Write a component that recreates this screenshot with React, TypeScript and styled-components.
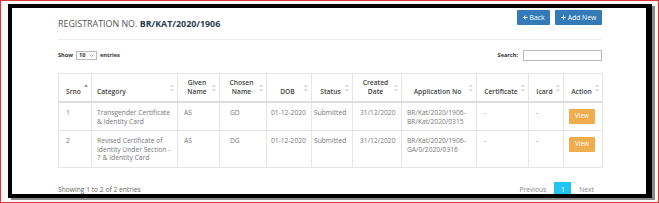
import styled, { createGlobalStyle } from "styled-components";
import { FaArrowLeft, FaPlus } from "react-icons/fa";

const GlobalStyle = createGlobalStyle`
  html, body {
    margin: 0;
    padding: 0;
    background: #ffffff;
  }
  body {
    font-family: "Open Sans", "Liberation Sans", sans-serif;
  }
`;

interface Column {
  title: string[];
  width: number;
  align?: "left" | "center";
  sorted?: boolean;
}

const columns: Column[] = [
  { title: ["Srno"], width: 33, sorted: true },
  { title: ["Category"], width: 86, align: "left" },
  { title: ["Given", "Name"], width: 42 },
  { title: ["Chosen", "Name"], width: 47 },
  { title: ["DOB"], width: 45 },
  { title: ["Status"], width: 41 },
  { title: ["Created", "Date"], width: 49 },
  { title: ["Application No"], width: 75 },
  { title: ["Certificate"], width: 52 },
  { title: ["Icard"], width: 35 },
  { title: ["Action"], width: 39 },
];

const rows = [
  {
    srno: "1",
    category: "Transgender Certificate & Identity Card",
    given: "AS",
    chosen: "GD",
    dob: "01-12-2020",
    status: "Submitted",
    created: "31/12/2020",
    appNo: "BR/Kat/2020/1906-BR/Kat/2020/0315",
  },
  {
    srno: "2",
    category: "Revised Certificate of Identity Under Section - 7 & Identity Card",
    given: "AS",
    chosen: "DG",
    dob: "01-12-2020",
    status: "Submitted",
    created: "31/12/2020",
    appNo: "BR/Kat/2020/1906-GA/0/2020/0316",
  },
];

function SortIcon({ sorted }: { sorted?: boolean }) {
  return (
    <StyledSort viewBox="0 0 4 8" width="4" height="8">
      <path d="M2 0 L4 3 L0 3 Z" fill={sorted ? "#9a9a9a" : "#dcdcdc"} />
      {!sorted && <path d="M0 5 L4 5 L2 8 Z" fill="#dcdcdc" />}
    </StyledSort>
  );
}

function App() {
  return (
    <>
      <GlobalStyle />
      <StyledPage>
        <StyledFrame>
          <StyledContent>
            <StyledHeader>
              <StyledTitle>
                REGISTRATION NO. <b>BR/KAT/2020/1906</b>
              </StyledTitle>
              <StyledActions>
                <StyledButton $width={33}>
                  <FaArrowLeft size={5} /> Back
                </StyledButton>
                <StyledButton $width={47}>
                  <FaPlus size={5} /> Add New
                </StyledButton>
              </StyledActions>
            </StyledHeader>

            <StyledControls>
              <StyledLabel>
                Show
                <StyledSelect>
                  <span>10</span>
                  <svg width="5" height="3" viewBox="0 0 5 3">
                    <path d="M0.5 0.5 L2.5 2.5 L4.5 0.5" stroke="#777" strokeWidth="0.7" fill="none" />
                  </svg>
                </StyledSelect>
                entries
              </StyledLabel>
              <StyledLabel>
                Search:
                <StyledSearch />
              </StyledLabel>
            </StyledControls>

            <StyledTable>
              <colgroup>
                {columns.map((c) => (
                  <col key={c.title.join(" ")} style={{ width: c.width }} />
                ))}
              </colgroup>
              <thead>
                <tr>
                  {columns.map((c) => (
                    <StyledTh key={c.title.join(" ")} $align={c.align ?? "center"}>
                      {c.title.map((t, i) => (
                        <div key={i}>{t}</div>
                      ))}
                      <SortIcon sorted={c.sorted} />
                    </StyledTh>
                  ))}
                </tr>
              </thead>
              <tbody>
                {rows.map((r) => (
                  <tr key={r.srno}>
                    <StyledTd $pad={7}>{r.srno}</StyledTd>
                    <StyledTd>{r.category}</StyledTd>
                    <StyledTd $pad={6}>{r.given}</StyledTd>
                    <StyledTd $pad={10}>{r.chosen}</StyledTd>
                    <StyledTd $pad={4}>{r.dob}</StyledTd>
                    <StyledTd $pad={2}>{r.status}</StyledTd>
                    <StyledTd $pad={7}>{r.created}</StyledTd>
                    <StyledTd>{r.appNo}</StyledTd>
                    <StyledTd $pad={7}>-</StyledTd>
                    <StyledTd $pad={7}>-</StyledTd>
                    <StyledTd>
                      <StyledView>View</StyledView>
                    </StyledTd>
                  </tr>
                ))}
              </tbody>
            </StyledTable>

            <StyledFooter>
              <span>Showing 1 to 2 of 2 entries</span>
              <StyledPager>
                <StyledPageLink>Previous</StyledPageLink>
                <StyledPageNum>1</StyledPageNum>
                <StyledPageLink>Next</StyledPageLink>
              </StyledPager>
            </StyledFooter>
          </StyledContent>
        </StyledFrame>
      </StyledPage>
    </>
  );
}

export default App;

const StyledPage = styled.div`
  width: 659px;
  height: 203px;
  box-sizing: border-box;
  border: 1px solid #d9353a;
  padding: 3px 0 0 7px;
  background: #fdf9f9;
  overflow: hidden;
`;

const StyledFrame = styled.div`
  width: 644px;
  height: 194px;
  box-sizing: border-box;
  border: 4px solid #000;
  border-right-width: 6px;
  box-shadow: 3px 2px 0 #8a8a8a;
  background: #fff;
`;

const StyledContent = styled.div`
  height: 100%;
  box-sizing: border-box;
  padding: 0 44px 0 46px;
  overflow: hidden;
`;

const StyledHeader = styled.div`
  display: flex;
  justify-content: space-between;
  align-items: flex-start;
  height: 32px;
  box-sizing: border-box;
  padding-top: 2px;
  border-bottom: 1px solid #eeeeee;
`;

const StyledTitle = styled.h1`
  margin: 9px 0 0;
  font-size: 8.9px;
  line-height: 10px;
  font-weight: 400;
  color: #555;

  b {
    color: #2c3e50;
    font-weight: 700;
  }
`;

const StyledActions = styled.div`
  display: flex;
  gap: 5px;
`;

const StyledButton = styled.button<{ $width: number }>`
  display: flex;
  align-items: center;
  justify-content: center;
  gap: 2px;
  width: ${(p) => p.$width}px;
  height: 15px;
  padding: 0;
  border: none;
  border-radius: 1px;
  background: #337ab7;
  color: #fff;
  font-family: inherit;
  font-size: 6.8px;
`;

const StyledControls = styled.div`
  display: flex;
  justify-content: space-between;
  align-items: center;
  margin-top: 9px;
  height: 12px;
`;

const StyledLabel = styled.label`
  display: flex;
  align-items: center;
  gap: 3px;
  font-size: 5.6px;
  font-weight: 700;
  color: #333;
`;

const StyledSelect = styled.div`
  display: flex;
  align-items: center;
  justify-content: space-between;
  width: 21px;
  height: 9px;
  box-sizing: border-box;
  padding: 0 2px;
  border: 1px solid #bbb;
  background: #fff;
`;

const StyledSearch = styled.div`
  width: 79px;
  height: 11px;
  box-sizing: border-box;
  border: 1px solid #bbb;
  margin-left: 2px;
`;

const StyledTable = styled.table`
  width: 544px;
  margin-top: 12px;
  table-layout: fixed;
  border-collapse: collapse;
  font-size: 6.7px;
  line-height: 8.5px;
`;

const StyledTh = styled.th<{ $align: "left" | "center" }>`
  position: relative;
  vertical-align: bottom;
  text-align: ${(p) => p.$align};
  padding: 3px 8px 5px 5px;
  height: 19px;
  font-weight: 600;
  color: #444;
  line-height: 9px;
  border: 1px solid #e6e6e6;
  border-bottom: 2px solid #dddddd;
`;

const StyledSort = styled.svg`
  position: absolute;
  right: 3px;
  top: 10px;
`;

const StyledTd = styled.td<{ $pad?: number }>`
  vertical-align: top;
  padding: 6px 4px 4px ${(p) => p.$pad ?? 5}px;
  color: #777;
  border: 1px solid #e6e6e6;
  overflow-wrap: break-word;
`;

const StyledView = styled.div`
  width: 26px;
  height: 15px;
  display: flex;
  align-items: center;
  justify-content: center;
  border-radius: 1px;
  background: #f0ad4e;
  color: #fff;
  font-size: 6.3px;
`;

const StyledFooter = styled.div`
  display: flex;
  justify-content: space-between;
  align-items: center;
  margin-top: 14px;
  font-size: 6.7px;
  color: #666;
`;

const StyledPager = styled.div`
  display: flex;
  align-items: center;
`;

const StyledPageLink = styled.span`
  padding: 0 8px;
  color: #888;
`;

const StyledPageNum = styled.span`
  display: flex;
  align-items: center;
  justify-content: center;
  width: 17px;
  height: 15px;
  background: #23c3f3;
  color: #fff;
`;
